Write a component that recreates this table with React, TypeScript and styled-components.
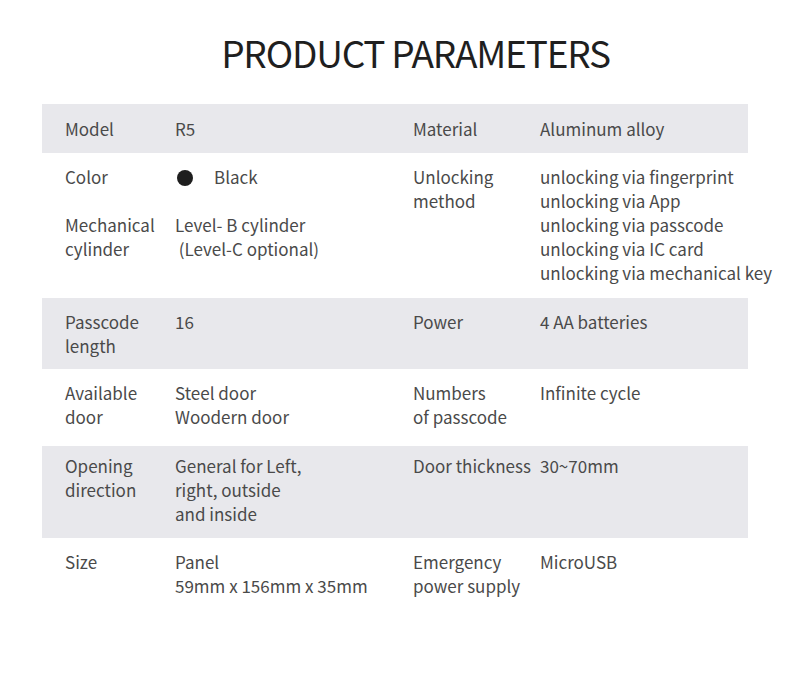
import React from "react";
import styled, { createGlobalStyle } from "styled-components";

const Global = createGlobalStyle`
  html, body { margin: 0; padding: 0; background: #ffffff; }
  body { font-family: "Noto Sans CJK SC", "Noto Sans", sans-serif; }
`;

const Page = styled.div`
  width: 790px;
  height: 681px;
  background: #fff;
  padding-top: 26px;
  box-sizing: border-box;
`;

const Title = styled.h1`
  margin: 0;
  padding-left: 41px;
  text-align: center;
  font-size: 37px;
  line-height: 52px;
  font-weight: 400;
  color: #1f1f1f;
  letter-spacing: -1.2px;
`;

const Table = styled.div`
  margin: 26px 0 0 42px;
  width: 706px;
  display: flex;
  flex-direction: column;
`;

const Row = styled.div<{ $shade?: boolean; $pt: number; $pb: number }>`
  display: flex;
  background: ${(p) => (p.$shade ? "#e8e8ec" : "transparent")};
  padding: ${(p) => p.$pt}px 0 ${(p) => p.$pb}px 23px;
  font-size: 17px;
  line-height: 24px;
  color: #4a4a4a;
`;

const Half = styled.div<{ $label: number; $width?: number }>`
  display: grid;
  grid-template-columns: ${(p) => p.$label}px 1fr;
  row-gap: 24px;
  align-content: start;
  ${(p) => (p.$width ? `width: ${p.$width}px; flex: none;` : "flex: 1;")}
`;

const Label = styled.div`
  white-space: nowrap;
`;

const Value = styled.div`
  white-space: nowrap;
`;

const Swatch = styled.span`
  display: inline-block;
  width: 16px;
  height: 16px;
  border-radius: 50%;
  background: #1e1e1e;
  margin: 0 21px 0 2px;
  vertical-align: -2px;
`;

type Pair = { label: React.ReactNode; value: React.ReactNode };
type RowData = { pt: number; pb: number; left: Pair[]; right: Pair[] };

const lines = (...items: string[]) =>
  items.map((t, i) => (
    <React.Fragment key={i}>
      {i > 0 && <br />}
      {t}
    </React.Fragment>
  ));

const rows: RowData[] = [
  {
    pt: 13,
    pb: 12,
    left: [{ label: "Model", value: "R5" }],
    right: [{ label: "Material", value: "Aluminum alloy" }],
  },
  {
    pt: 12,
    pb: 13,
    left: [
      {
        label: "Color",
        value: (
          <>
            <Swatch />
            Black
          </>
        ),
      },
      {
        label: lines("Mechanical", "cylinder"),
        value: lines("Level- B cylinder", "\u00a0(Level-C optional)"),
      },
    ],
    right: [
      {
        label: lines("Unlocking", "method"),
        value: lines(
          "unlocking via fingerprint",
          "unlocking via App",
          "unlocking via passcode",
          "unlocking via IC card",
          "unlocking via mechanical key"
        ),
      },
    ],
  },
  {
    pt: 12,
    pb: 11,
    left: [{ label: lines("Passcode", "length"), value: "16" }],
    right: [{ label: "Power", value: "4 AA batteries" }],
  },
  {
    pt: 12,
    pb: 17,
    left: [
      { label: lines("Available", "door"), value: lines("Steel door", "Woodern door") },
    ],
    right: [{ label: lines("Numbers", "of passcode"), value: "Infinite cycle" }],
  },
  {
    pt: 8,
    pb: 12,
    left: [
      {
        label: lines("Opening", "direction"),
        value: lines("General for Left,", "right, outside", "and inside"),
      },
    ],
    right: [{ label: "Door thickness", value: "30~70mm" }],
  },
  {
    pt: 12,
    pb: 12,
    left: [{ label: "Size", value: lines("Panel", "59mm x 156mm x 35mm") }],
    right: [{ label: lines("Emergency", "power supply"), value: "MicroUSB" }],
  },
];

export default function App() {
  return (
    <Page>
      <Global />
      <Title>PRODUCT PARAMETERS</Title>
      <Table>
        {rows.map((r, i) => (
          <Row key={i} $shade={i % 2 === 0} $pt={r.pt} $pb={r.pb}>
            <Half $label={110} $width={348}>
              {r.left.map((p, j) => (
                <React.Fragment key={j}>
                  <Label>{p.label}</Label>
                  <Value>{p.value}</Value>
                </React.Fragment>
              ))}
            </Half>
            <Half $label={127}>
              {r.right.map((p, j) => (
                <React.Fragment key={j}>
                  <Label>{p.label}</Label>
                  <Value>{p.value}</Value>
                </React.Fragment>
              ))}
            </Half>
          </Row>
        ))}
      </Table>
    </Page>
  );
}
